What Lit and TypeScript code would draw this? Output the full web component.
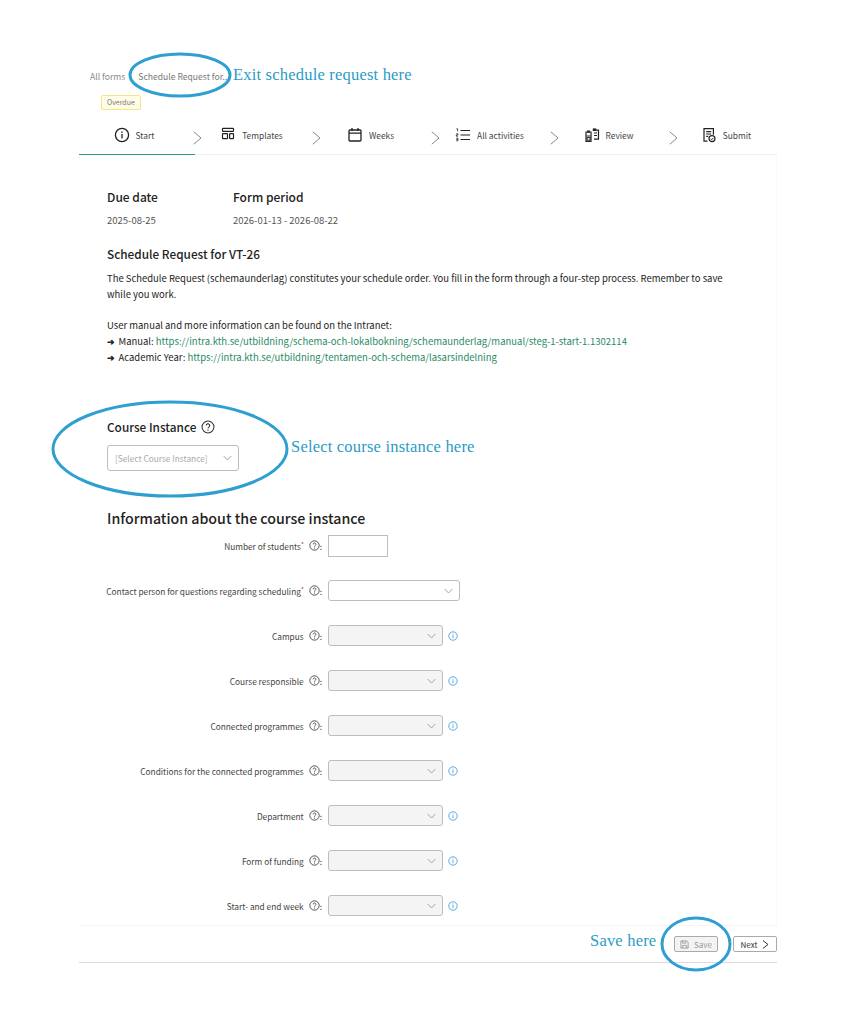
import { LitElement, html, css, svg } from "lit";
import { customElement } from "lit/decorators.js";

const stepIcons: Record<string, unknown> = {
  info: svg`<circle cx="8" cy="8" r="6.6" fill="none" stroke="#222" stroke-width="1.3"/><rect x="7.35" y="7" width="1.3" height="4.4" fill="#222"/><rect x="7.35" y="4.5" width="1.3" height="1.4" fill="#222"/>`,
  templates: svg`<rect x="2.5" y="1.4" width="11" height="3" rx=".6" fill="none" stroke="#222" stroke-width="1.2"/><rect x="2.5" y="6.6" width="5" height="5" rx=".6" fill="none" stroke="#222" stroke-width="1.2"/><rect x="9.6" y="6.6" width="3.9" height="5" rx=".6" fill="none" stroke="#222" stroke-width="1.2"/>`,
  calendar: svg`<rect x="2" y="3" width="12" height="11" rx="1" fill="none" stroke="#222" stroke-width="1.3"/><path d="M2 6.2h12M5 1v3M11 1v3" fill="none" stroke="#222" stroke-width="1.3"/>`,
  list: svg`<path d="M5.5 3.5h9.5M5.5 8h9.5M5.5 12.5h9.5" fill="none" stroke="#222" stroke-width="1.2"/><path d="M1.4 1.8h1.2v2.6M1.2 6.8h1.7v1.2H1.3v1.2h1.7M1.2 11.2h1.7v2.6H1.2M1.4 12.5h1.5" fill="none" stroke="#222" stroke-width=".8"/>`,
  review: svg`<path d="M7 5H2v9.5h5zM10 3.2h4.5v9H10" fill="none" stroke="#222" stroke-width="1.2"/><rect x="3.2" y="3.4" width="2.6" height="2.4" fill="#222"/><rect x="8.8" y="1.4" width="3.4" height="2.6" fill="#222"/><path d="M2.5 9h4M10 6h3M10 8.5h3" stroke="#222" stroke-width="1.1"/><rect x="3" y="10.6" width="3" height="2.6" fill="none" stroke="#222"/>`,
  submit: svg`<path d="M6.5 14.2H3V1.6h9.4v6.2" fill="none" stroke="#222" stroke-width="1.2"/><path d="M5.2 4.6h5M5.2 7h5M5.2 9.4h2" stroke="#222" stroke-width="1.1"/><circle cx="11" cy="11.6" r="3" fill="none" stroke="#222" stroke-width="1.2"/><path d="M9.6 11.8l1 1 1.9-2" fill="none" stroke="#222" stroke-width="1"/>`,
};

const steps = [
  { label: "Start", icon: "info" },
  { label: "Templates", icon: "templates" },
  { label: "Weeks", icon: "calendar" },
  { label: "All activities", icon: "list" },
  { label: "Review", icon: "review" },
  { label: "Submit", icon: "submit" },
];

const fields = [
  { label: "Number of students", req: true, kind: "input" },
  { label: "Contact person for questions regarding scheduling", req: true, kind: "wide" },
  { label: "Campus", kind: "select" },
  { label: "Course responsible", kind: "select" },
  { label: "Connected programmes", kind: "select" },
  { label: "Conditions for the connected programmes", kind: "select" },
  { label: "Department", kind: "select" },
  { label: "Form of funding", kind: "select" },
  { label: "Start- and end week", kind: "select" },
];

const help = (size: number) => html`<svg class="help" width=${size} height=${size} viewBox="0 0 16 16">
  <circle cx="8" cy="8" r="6.8" fill="none" stroke="#333" stroke-width="1.2"/>
  <path d="M6 6.3a2 2 0 1 1 3.2 1.6c-.8.5-1.2.9-1.2 1.7" fill="none" stroke="#333" stroke-width="1.2"/>
  <circle cx="8" cy="11.6" r=".8" fill="#333"/></svg>`;

const caret = html`<svg class="caret" width="9" height="6" viewBox="0 0 9 6"><path d="M.7 1l3.8 4 3.8-4" fill="none" stroke="#a6a6a6" stroke-width="1"/></svg>`;

@customElement("app-root")
export class AppRoot extends LitElement {
  static styles = css`
    :host {
      display: block;
      position: relative;
      width: 844px;
      height: 1020px;
      background: #fff;
      font-family: "Noto Sans CJK SC", "Noto Sans", sans-serif;
      color: #222;
      overflow: hidden;
    }
    .page { padding: 69px 67px 0 79px; }
    .crumbs { display: flex; gap: 13px; padding-left: 11px; font-size: 8.6px; line-height: 15px; color: #8a8a8a; }
    .crumbs .cur { color: #777; }
    .badge {
      display: inline-block; margin: 11px 0 0 22px; padding: 0 5px; font-size: 7px; line-height: 13px;
      color: #777; background: #fffde6; border: 1px solid #f2e58a; border-radius: 2px;
    }
    .badge-row { height: 34px; }
    .steps { display: flex; height: 37px; border-bottom: 1px solid #f0f0f0; box-sizing: content-box; margin-top: -1px; }
    .step { position: relative; display: flex; width: 119px; align-items: center; }
    .step:first-child { width: 124px; }
    .step:last-child { width: 98px; }
    .step:first-child::after {
      content: ""; position: absolute; left: 0; bottom: -1px; width: 116px; height: 1px; background: #2f9c86;
    }
    .step-body {
      flex: 1; display: flex; align-items: center; justify-content: center; gap: 6px;
      padding: 0 12px 2px 0; font-size: 8.4px; color: #444;
    }
    .step:first-child .step-body, .step:last-child .step-body { padding-right: 4px; }
    .step-body svg { display: block; }
    .chev { display: block; margin-right: 1px; margin-top: 5px; }
    .content { padding: 33px 28px 0; background: #fff; height: 770px; box-sizing: border-box; box-shadow: inset -1px 0 0 #fafafa; }
    .meta { display: flex; gap: 0; }
    .meta > div { width: 126px; }
    .meta h4 { margin: 0; font-size: 12px; line-height: 18px; font-weight: 500; color: #222; }
    .meta p { margin: 7px 0 0; font-size: 9.5px; line-height: 14px; color: #555; }
    h3 { margin: 18px 0 0; font-size: 11.8px; line-height: 18px; font-weight: 500; color: #222; }
    .para { margin: 7px 0 0; font-size: 9.47px; line-height: 16px; color: #222; width: 620px; }
    .links { margin: 15px 0 0; font-size: 9.47px; line-height: 16px; color: #222; }
    .arrow { display: inline-block; width: 11.5px; font-weight: 700; }
    a { color: #2a8a63; text-decoration: none; font-size: 9.5px; }
    .ci-title { display: flex; align-items: center; gap: 5px; margin-top: 53px; font-size: 11.8px; line-height: 18px; font-weight: 500; }
    .ci-select {
      display: flex; align-items: center; justify-content: space-between; box-sizing: border-box;
      width: 132px; height: 26px; margin-top: 9px; padding: 0 6px 0 7px; border: 1px solid #bdbdbd; border-radius: 3px;
      font-size: 8.3px; color: #aaa; background: #fff;
    }
    h2 { margin: 37px 0 0; font-size: 14.2px; line-height: 20px; font-weight: 500; color: #222; }
    .form { margin-top: -5px; display: grid; grid-template-columns: 216px auto 1fr; grid-auto-rows: 45px; align-items: center; column-gap: 5px; }
    .lab { display: flex; align-items: center; justify-content: flex-end; font-size: 8.3px; color: #444; white-space: nowrap; padding-right: 1px; }
    .lab sup { font-size: 6px; line-height: 0; color: #a33; margin-top: -2px; vertical-align: super; }
    .lab .help { margin: 0 0 0 5px; flex: none; }
    .ctl { display: flex; align-items: center; }
    .input { box-sizing: border-box; width: 60px; height: 22px; border: 1px solid #bdbdbd; background: #fff; }
    .sel {
      box-sizing: border-box; display: flex; align-items: center; justify-content: flex-end; width: 115px; height: 21px;
      padding-right: 6px; border: 1px solid #bdbdbd; border-radius: 3px; background: #f4f4f4;
    }
    .sel.wide { width: 132px; background: #fff; }
    .i { margin-left: 5px; display: block; }
    .foot {
      display: flex; justify-content: flex-end; align-items: center; gap: 15px; height: 38px; box-sizing: border-box;
      border-top: 1px solid #f4f4f4; border-bottom: 1px solid #dcdcdc;
    }
    .btn {
      box-sizing: border-box; display: flex; align-items: center; justify-content: center; gap: 5px; height: 16px; font-size: 8px;
      border: 1px solid #aaa; border-radius: 2px; background: #fff; color: #333;
    }
    .btn.save { width: 44px; background: #f3f3f3; color: #999; }
    .btn.next { width: 44px; }
    .note { position: absolute; font-family: "Liberation Serif", serif; font-size: 16.5px; line-height: 18px; color: #2b9bc6; white-space: nowrap; letter-spacing: .2px; }
    .over { position: absolute; left: 0; top: 0; pointer-events: none; }
  `;

  render() {
    return html`
      <div class="page">
        <div class="crumbs"><span>All forms</span><span class="cur">Schedule Request for...</span></div>
        <div class="badge-row"><span class="badge">Overdue</span></div>
        <div class="steps">
          ${steps.map((s, i) => html`<div class="step">
            <div class="step-body">
              <svg width="16" height="16" viewBox="0 0 16 16">${stepIcons[s.icon]}</svg><span>${s.label}</span>
            </div>
            ${i < 5 ? html`<svg class="chev" width="9" height="14" viewBox="0 0 9 14"><path d="M.8 .8l7.2 6.2-7.2 6.2" fill="none" stroke="#888" stroke-width="1"/></svg>` : ""}
          </div>`)}
        </div>
        <div class="content">
          <div class="meta">
            <div><h4>Due date</h4><p>2025-08-25</p></div>
            <div><h4>Form period</h4><p>2026-01-13 - 2026-08-22</p></div>
          </div>
          <h3>Schedule Request for VT-26</h3>
          <p class="para">The Schedule Request (schemaunderlag) constitutes your schedule order. You fill in the form through a four-step process. Remember to save while you work.</p>
          <p class="links">User manual and more information can be found on the Intranet:<br />
            <span class="arrow">➜</span>Manual: <a>https://intra.kth.se/utbildning/schema-och-lokalbokning/schemaunderlag/manual/steg-1-start-1.1302114</a><br />
            <span class="arrow">➜</span>Academic Year: <a>https://intra.kth.se/utbildning/tentamen-och-schema/lasarsindelning</a></p>
          <div class="ci-title">Course Instance ${help(14)}</div>
          <div class="ci-select"><span>[Select Course Instance]</span>${caret}</div>
          <h2>Information about the course instance</h2>
          <div class="form">
            ${fields.map((f) => html`
              <div class="lab">${f.label}${f.req ? html`<sup>*</sup>` : ""}${help(11)}:</div>
              <div class="ctl">
                ${f.kind === "input" ? html`<div class="input"></div>` : html`<div class="sel ${f.kind === "wide" ? "wide" : ""}">${caret}</div>`}
                ${f.kind === "select" ? html`<svg class="i" width="10" height="10" viewBox="0 0 10 10"><circle cx="5" cy="5" r="4.2" fill="none" stroke="#4a9fe0" stroke-width=".9"/><path d="M5 4.2v3M5 2.6v.9" stroke="#4a9fe0" stroke-width=".9"/></svg>` : ""}
              </div>
              <div></div>`)}
          </div>
        </div>
        <div class="foot">
          <div class="btn save"><svg width="9" height="9" viewBox="0 0 10 10"><path d="M1 1h6.5L9 2.5V9H1z" fill="none" stroke="#888" stroke-width=".8"/><path d="M3 1v2.5h3.5V1M3 9V6h4v3" fill="none" stroke="#888" stroke-width=".8"/></svg>Save</div>
          <div class="btn next">Next<svg width="7" height="9" viewBox="0 0 7 9"><path d="M1 .6l5 3.9-5 3.9" fill="none" stroke="#333" stroke-width="1"/></svg></div>
        </div>
      </div>
      <svg class="over" width="844" height="1020" viewBox="0 0 844 1020">
        <g fill="none" stroke="#2e9fd0" stroke-width="3">
          <ellipse cx="180" cy="75" rx="50" ry="21"/>
          <ellipse cx="170" cy="449" rx="117" ry="47"/>
          <ellipse cx="696" cy="944" rx="34" ry="26"/>
        </g>
      </svg>
      <div class="note" style="left:233px;top:66px">Exit schedule request here</div>
      <div class="note" style="left:291px;top:438px">Select course instance here</div>
      <div class="note" style="left:590px;top:932px">Save here</div>
    `;
  }
}
